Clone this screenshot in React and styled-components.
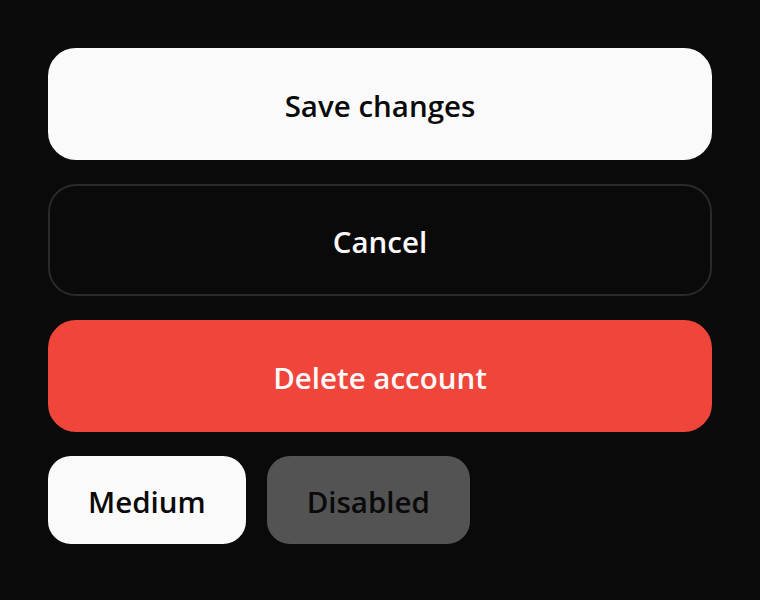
import React from "react";
import styled, { createGlobalStyle, css } from "styled-components";

const Global = createGlobalStyle`
  html, body { margin: 0; padding: 0; background: #0a0a0a; }
  body { font-family: "Open Sans", "Noto Sans", sans-serif; }
`;

const Page = styled.div`
  box-sizing: border-box;
  width: 760px;
  height: 600px;
  padding: 48px;
  display: flex;
  flex-direction: column;
  gap: 24px;
  background: #0a0a0a;
`;

const variants = {
  primary: css`
    background: #fafafa;
    color: #0a0a0a;
    border: 2px solid #fafafa;
  `,
  outline: css`
    background: #0a0a0a;
    color: #fafafa;
    border: 2px solid #2a2a2a;
  `,
  destructive: css`
    background: #f0453a;
    color: #fafafa;
    border: 2px solid #f0453a;
  `,
};

const Button = styled.button`
  box-sizing: border-box;
  font-family: "Open Sans", "Noto Sans", sans-serif;
  font-weight: 600;
  font-size: 29.5px;
  display: inline-flex;
  align-items: center;
  justify-content: center;
  padding-top: 4px;
  cursor: pointer;
  ${(p) => variants[p.$variant || "primary"]}
  ${(p) =>
    p.$size === "md"
      ? css`
          height: 88px;
          padding-left: 38px;
          padding-right: 38px;
          border-radius: 23px;
        `
      : css`
          width: 100%;
          height: 112px;
          border-radius: 28px;
        `}
  &:disabled {
    opacity: 0.3;
    cursor: not-allowed;
  }
`;

const Row = styled.div`
  display: flex;
  gap: 21px;
`;

export default function App() {
  return (
    <>
      <Global />
      <Page>
        <Button $variant="primary">Save changes</Button>
        <Button $variant="outline">Cancel</Button>
        <Button $variant="destructive">Delete account</Button>
        <Row>
          <Button $size="md">Medium</Button>
          <Button $size="md" disabled>
            Disabled
          </Button>
        </Row>
      </Page>
    </>
  );
}
